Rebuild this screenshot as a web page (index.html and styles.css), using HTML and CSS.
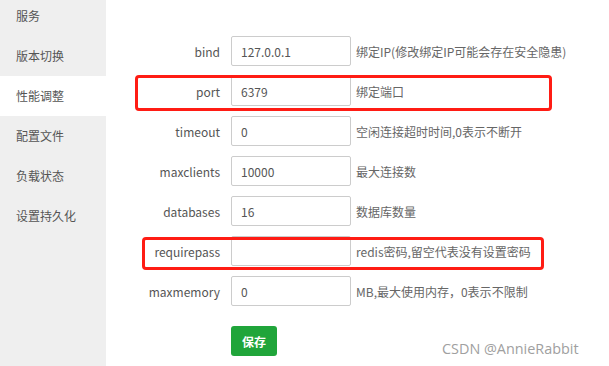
FILE: index.html
```html
<!DOCTYPE html>
<html lang="zh-CN">
<head>
<meta charset="utf-8">
<link rel="stylesheet" href="styles.css">
</head>
<body>
<div class="page">
  <aside class="side">
    <div class="item first">服务</div>
    <div class="item">版本切换</div>
    <div class="item active">性能调整</div>
    <div class="item">配置文件</div>
    <div class="item">负载状态</div>
    <div class="item">设置持久化</div>
  </aside>
  <main class="main">
    <div class="row"><span class="lbl">bind</span><input class="inp" value="127.0.0.1"><span class="help">绑定IP(修改绑定IP可能会存在安全隐患)</span></div>
    <div class="row"><span class="lbl">port</span><input class="inp" value="6379"><span class="help">绑定端口</span></div>
    <div class="row"><span class="lbl">timeout</span><input class="inp" value="0"><span class="help">空闲连接超时时间,0表示不断开</span></div>
    <div class="row"><span class="lbl">maxclients</span><input class="inp" value="10000"><span class="help">最大连接数</span></div>
    <div class="row"><span class="lbl">databases</span><input class="inp" value="16"><span class="help">数据库数量</span></div>
    <div class="row"><span class="lbl">requirepass</span><input class="inp" value=""><span class="help">redis密码,留空代表没有设置密码</span></div>
    <div class="row"><span class="lbl">maxmemory</span><input class="inp" value="0"><span class="help">MB,最大使用内存，0表示不限制</span></div>
    <div class="row btnrow"><button class="save">保存</button></div>
  </main>
  <div class="mark mark-port"></div>
  <div class="mark mark-pass"></div>
  <div class="wm">CSDN @AnnieRabbit</div>
</div>
</body>
</html>
```
FILE: styles.css
```css
* { box-sizing: border-box; }
html, body { margin: 0; padding: 0; background: #fff; }
body { font-family: "Noto Sans CJK SC", "Open Sans", sans-serif; width: 609px; height: 366px; overflow: hidden; }
.page { position: relative; display: flex; width: 609px; height: 366px; }
.side { width: 106px; background: #efefef; height: 366px; flex: none; }
.item { height: 40px; line-height: 40px; padding-left: 16px; font-size: 12px; color: #555; }
.item.first { height: 36px; line-height: 32px; }
.item.active { background: #fff; }
.main { flex: 1; padding-top: 36px; }
.row { display: flex; align-items: center; height: 30px; margin-bottom: 10px; }
.lbl { width: 125px; text-align: right; padding-right: 11px; font-size: 12px; color: #555; flex: none; }
.btnrow { margin-top: 20px; padding-left: 125px; }
.inp { width: 120px; height: 30px; border: 1px solid #ccc; border-radius: 2px; padding: 0 9px; font-family: inherit; font-size: 12px; color: #555; outline: none; flex: none; margin: 0; }
.help { margin-left: 5px; font-size: 12px; color: #666; white-space: nowrap; }
.save { width: 46px; height: 30px; border: none; border-radius: 3px; background: #20a53a; color: #fff; font-family: inherit; font-size: 12px; font-weight: bold; padding: 0; }
.mark { position: absolute; border: 3px solid #ff1c14; border-radius: 4px; }
.mark-port { left: 135px; top: 75px; width: 417px; height: 36px; }
.mark-pass { left: 142px; top: 237px; width: 402px; height: 33px; }
.wm { position: absolute; left: 442px; top: 339px; font-family: "Open Sans", "Liberation Sans", sans-serif; font-size: 14.4px; color: #a0a0a0; line-height: 20px; }
```
